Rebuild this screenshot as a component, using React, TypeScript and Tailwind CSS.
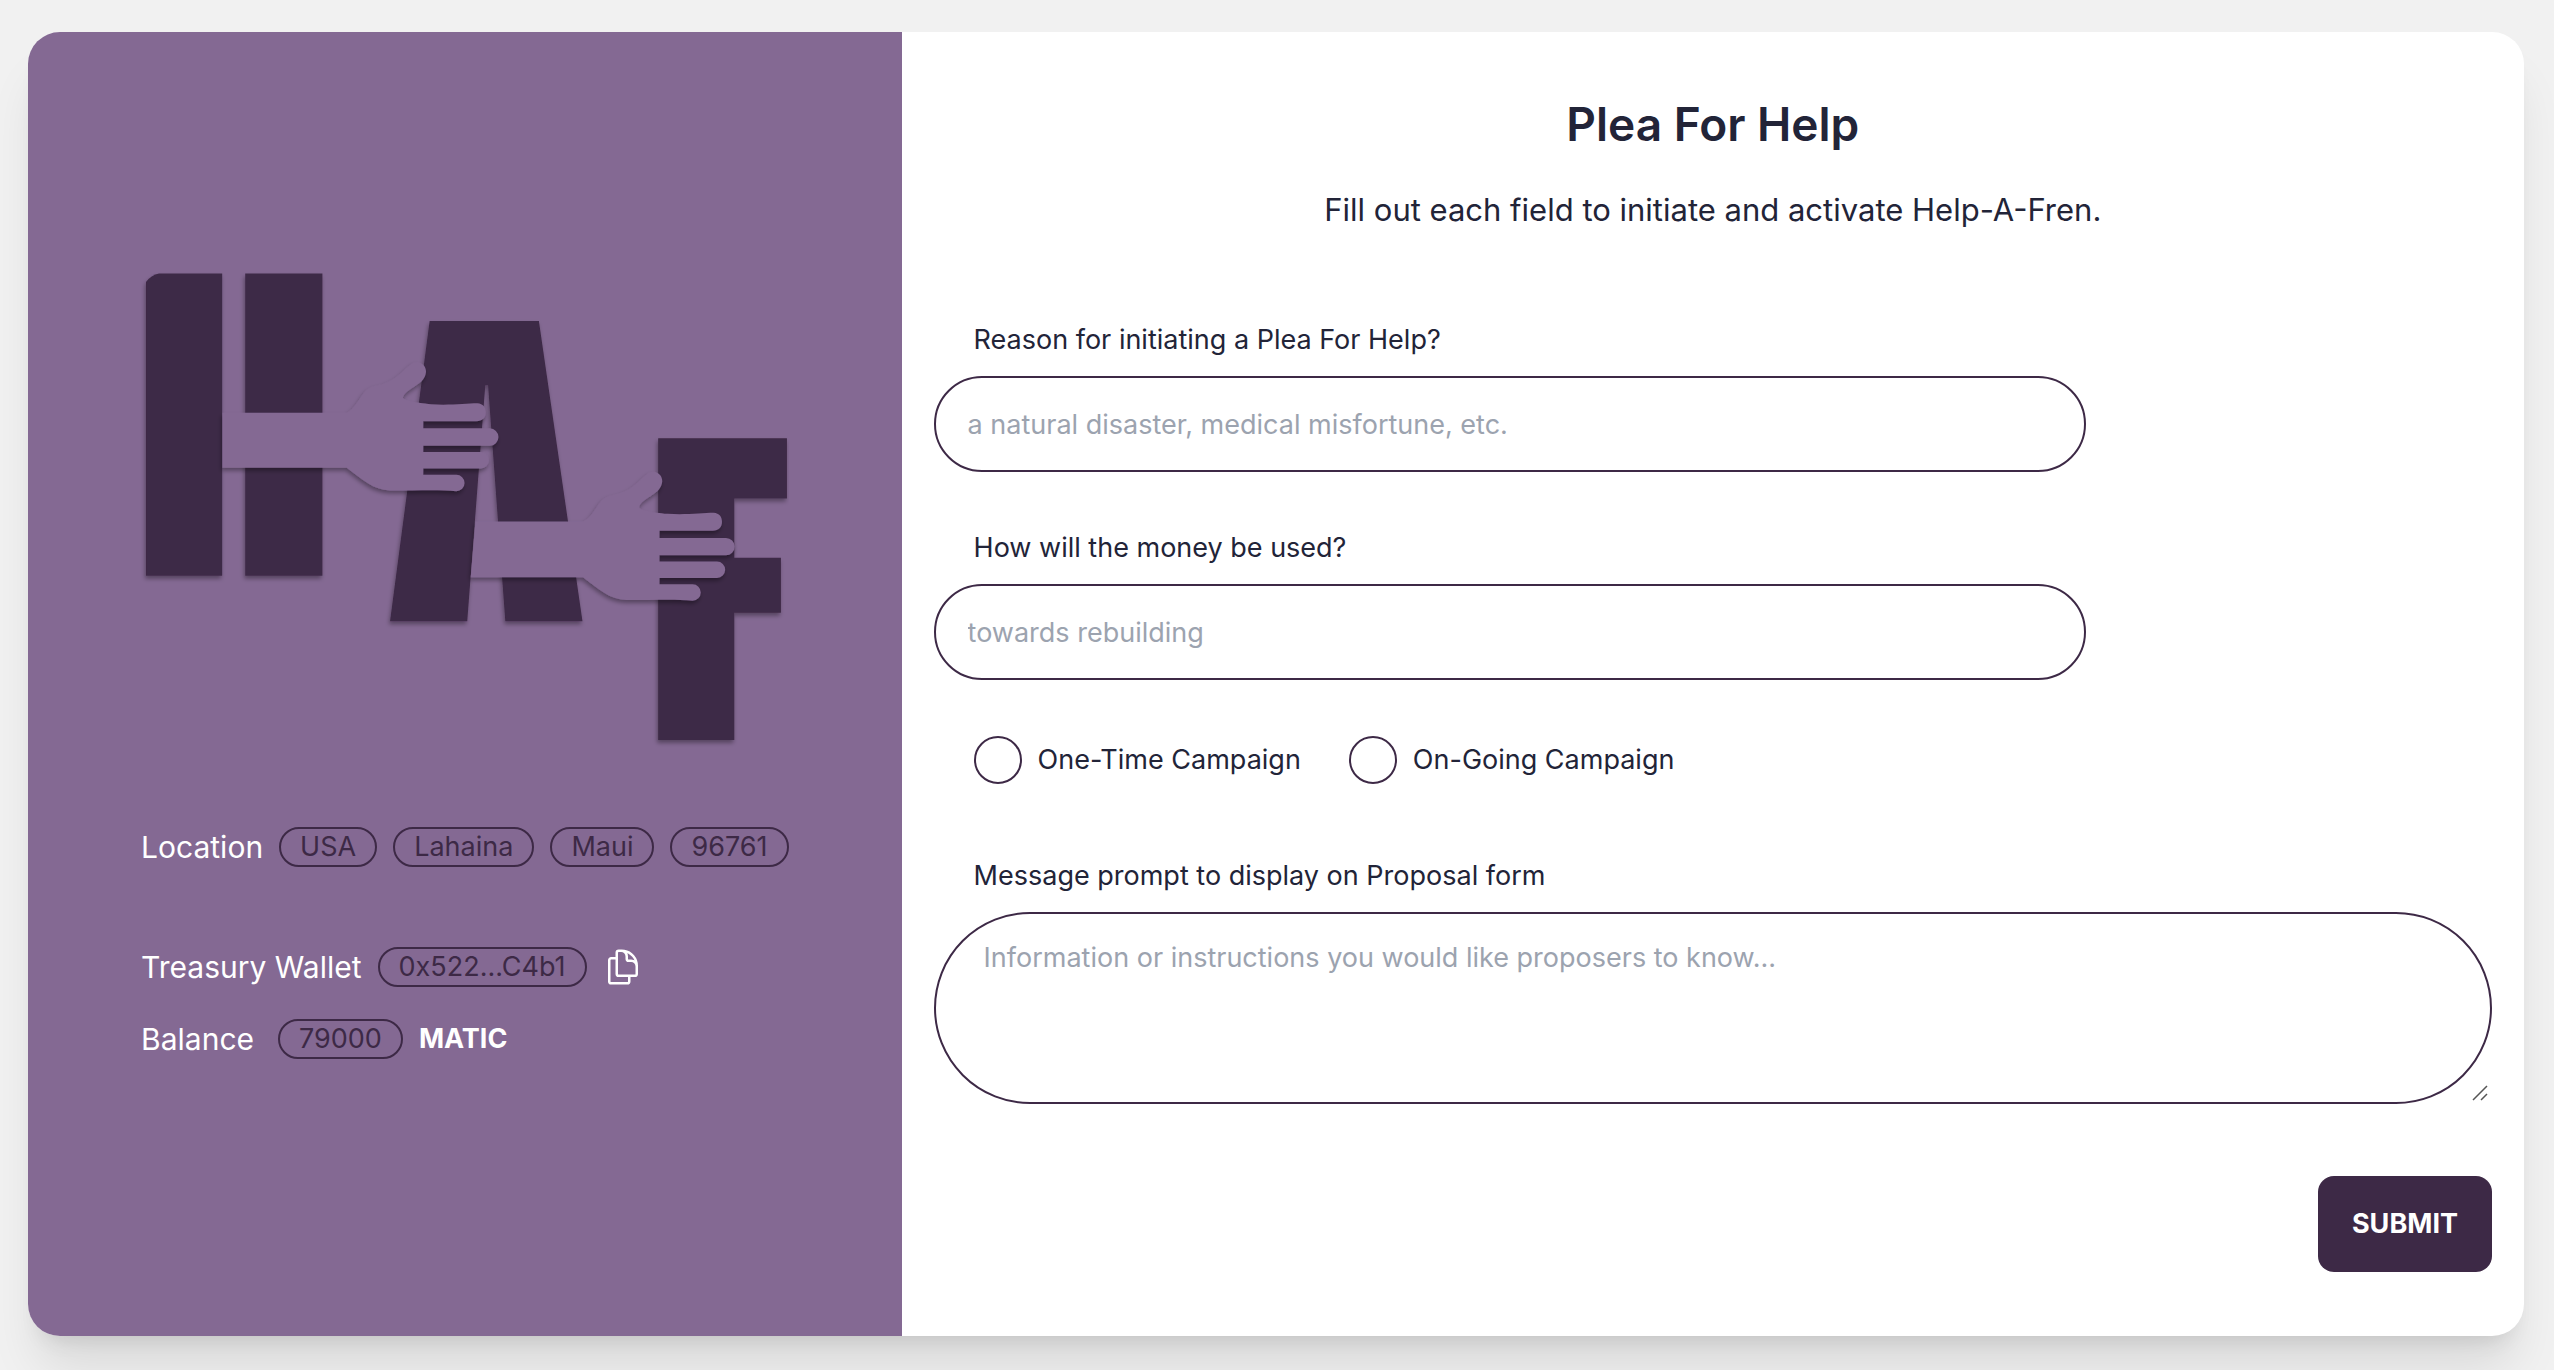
import type { ReactNode } from "react";

const HAND =
  "H682 C705 475 715 450 735 425 C755 403 775 408 795 399 C830 387 850 362 872 344 C880 336 890 335 897 336 C912 341 920 352 919 366 C917 385 905 396 890 405 C875 416 852 428 850 442 C850 450 890 458 935 462 C990 466 1040 459 1073 459 C1090 461 1098 470 1098 486 C1098 502 1088 513 1070 513 H911 V534 H1110 A26 26 0 0 1 1110 586 H911 V605 H1083 A24 24 0 0 1 1083 654 H911 V673 H1010 A24 24 0 0 1 1010 722 C960 717 900 720 812 720 C760 718 730 688 682 652";

function Logo() {
  return (
    <svg
      viewBox="142 272 646 494"
      className="block w-full"
      role="img"
      aria-label="Help-A-Fren"
    >
      <defs>
        <filter id="lift" x="-10%" y="-10%" width="120%" height="120%">
          <feDropShadow dx="-1" dy="3" stdDeviation="2" floodColor="#000" floodOpacity="0.35" />
        </filter>
      </defs>
      <g fill="#3d2946" filter="url(#lift)">
        <path d="M147 282 Q152 275 160 273.500 H223 V575 H147 Z" />
        <path d="M246 273.500 H323 V575 H246 Z" />
        <path d="M430 321 H539 L582.5 620.5 H505.5 L488.3 385 H485.5 L467.5 620.5 H390.5 Z" />
        <path d="M658 438 H786.5 V498 H734 V557 H780.5 V612 H734 V739 H658 Z" />
      </g>
      <g fill="#846993">
        <g filter="url(#lift)">
          <path transform="translate(120 250) scale(0.33333)" d={`M310 487 ${HAND} H310 Z`} />
        </g>
        <g filter="url(#lift)">
          <path transform="translate(355.7 359.3) scale(0.33333)" d={`M360 485 ${HAND} H346 Z`} />
        </g>
      </g>
    </svg>
  );
}

function CopyIcon() {
  return (
    <svg
      viewBox="0 0 24 24"
      className="size-10"
      fill="none"
      stroke="currentColor"
      strokeWidth="1.5"
      strokeLinecap="round"
      strokeLinejoin="round"
      aria-hidden="true"
    >
      <path d="M15.75 17.25v3.375c0 .621-.504 1.125-1.125 1.125h-9.75a1.125 1.125 0 0 1-1.125-1.125V7.875c0-.621.504-1.125 1.125-1.125H6.75a9.06 9.06 0 0 1 1.5.124m7.5 10.376h3.375c.621 0 1.125-.504 1.125-1.125V11.25c0-4.46-3.243-8.161-7.5-8.876a9.06 9.06 0 0 0-1.5-.124H9.375c-.621 0-1.125.504-1.125 1.125v3.5m7.5 10.375H9.375a1.125 1.125 0 0 1-1.125-1.125v-9.25m12 6.625v-1.875a3.375 3.375 0 0 0-3.375-3.375h-1.5a1.125 1.125 0 0 1-1.125-1.125v-1.5a3.375 3.375 0 0 0-3.375-3.375H9.75" />
    </svg>
  );
}

function ResizeGrip() {
  return (
    <svg
      viewBox="0 0 16 16"
      className="pointer-events-none absolute right-1 bottom-[3px] size-4"
      fill="none"
      stroke="#555555"
      strokeWidth="1.5"
      aria-hidden="true"
    >
      <path d="M1 15 15 1M9 15l6-6" />
    </svg>
  );
}

function Badge({ children }: { children: ReactNode }) {
  return (
    <span className="flex h-10 items-center rounded-full border-2 border-[#3d2946] px-[19px] text-[27px] text-[#3d2946]">
      {children}
    </span>
  );
}

function TextField({ id, label, placeholder }: { id: string; label: string; placeholder: string }) {
  return (
    <div className="flex flex-col">
      <label htmlFor={id} className="px-10 py-4 text-[27px] leading-10">
        {label}
      </label>
      <input
        id={id}
        type="text"
        placeholder={placeholder}
        className="h-24 w-full max-w-6xl rounded-full border-2 border-[#3d2946] bg-white px-8 text-[27px] placeholder:text-[#9ca3af]"
      />
    </div>
  );
}

function Choice({ label }: { label: string }) {
  return (
    <label className="flex items-center gap-4 text-[27px]">
      <input
        type="radio"
        name="campaign"
        className="size-12 appearance-none rounded-full border-2 border-[#3d2946] checked:bg-[#3d2946]"
      />
      {label}
    </label>
  );
}

export default function App() {
  return (
    <main className="flex min-h-screen flex-col bg-[#f1f1f1] pt-8 pr-[30px] pb-[34px] pl-7 font-['Inter',sans-serif] text-[#222438]">
      <div className="flex grow overflow-hidden rounded-[32px] bg-white shadow-[0_40px_50px_-10px_rgba(0,0,0,0.1),0_16px_20px_-12px_rgba(0,0,0,0.1)]">
        <aside className="flex w-[35%] shrink-0 flex-col items-center bg-[#846993] pt-60 text-[30px] text-white">
          <div className="flex w-fit flex-col">
            <Logo />
            <div className="mt-15 flex items-center gap-4 leading-10">
              <span>Location</span>
              <Badge>USA</Badge>
              <Badge>Lahaina</Badge>
              <Badge>Maui</Badge>
              <Badge>96761</Badge>
            </div>
            <div className="mt-20 flex items-center gap-4 leading-10">
              <span>Treasury Wallet</span>
              <Badge>0x522...C4b1</Badge>
              <button type="button" aria-label="Copy wallet address">
                <CopyIcon />
              </button>
            </div>
            <div className="mt-8 flex items-center gap-4 leading-10">
              <span className="mr-2">Balance</span>
              <Badge>79000</Badge>
              <span className="text-[27px] font-bold">MATIC</span>
            </div>
          </div>
        </aside>

        <section className="flex grow flex-col px-8 pt-[62px]">
          <h1 className="text-center text-[46px] leading-[60px] font-semibold">Plea For Help</h1>
          <p className="mt-7 text-center text-[31px] leading-[56px]">
            Fill out each field to initiate and activate Help-A-Fren.
          </p>
          <form className="mt-[66px] flex flex-col" onSubmit={(e) => e.preventDefault()}>
            <div className="flex flex-col gap-10">
              <TextField
                id="reason"
                label="Reason for initiating a Plea For Help?"
                placeholder="a natural disaster, medical misfortune, etc."
              />
              <TextField
                id="usage"
                label="How will the money be used?"
                placeholder="towards rebuilding"
              />
            </div>
            <div className="mt-14 flex gap-12 px-10">
              <Choice label="One-Time Campaign" />
              <Choice label="On-Going Campaign" />
            </div>
            <label htmlFor="message" className="mt-14 px-10 py-4 text-[27px] leading-10">
              Message prompt to display on Proposal form
            </label>
            <div className="relative">
              <textarea
                id="message"
                placeholder="Information or instructions you would like proposers to know..."
                className="block h-48 w-full resize-y rounded-[96px] border-2 border-[#3d2946] bg-white px-12 py-4 text-[27px] leading-[56px] placeholder:text-[#9ca3af] [&::-webkit-resizer]:hidden"
              />
              <ResizeGrip />
            </div>
            <button
              type="submit"
              className="mt-18 h-24 self-end rounded-2xl bg-[#3d2946] px-[34px] text-[27px] font-bold text-white"
            >
              SUBMIT
            </button>
          </form>
        </section>
      </div>
    </main>
  );
}
